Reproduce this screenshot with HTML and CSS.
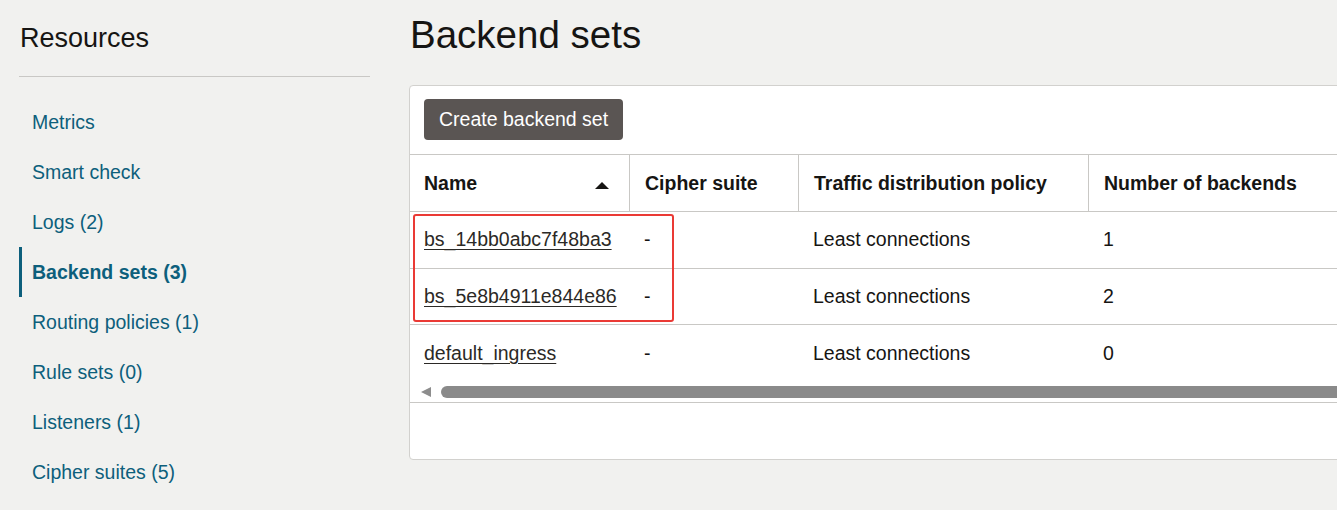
FILE: index.html
```html
<!DOCTYPE html>
<html lang="en">
<head>
<meta charset="utf-8">
<title>Backend sets</title>
<link rel="stylesheet" href="styles.css">
</head>
<body>
<aside class="sidebar">
  <h2 class="side-title">Resources</h2>
  <hr class="side-rule">
  <nav class="side-nav">
    <a class="nav-item" href="#">Metrics</a>
    <a class="nav-item" href="#">Smart check</a>
    <a class="nav-item" href="#">Logs (2)</a>
    <a class="nav-item active" href="#">Backend sets (3)</a>
    <a class="nav-item" href="#">Routing policies (1)</a>
    <a class="nav-item" href="#">Rule sets (0)</a>
    <a class="nav-item" href="#">Listeners (1)</a>
    <a class="nav-item" href="#">Cipher suites (5)</a>
  </nav>
</aside>
<main class="main">
  <h1 class="page-title">Backend sets</h1>
  <section class="panel">
    <div class="toolbar">
      <button class="btn">Create backend set</button>
    </div>
    <div class="grid">
      <div class="row head">
        <div class="cell first">Name <span class="sort"></span></div>
        <div class="cell">Cipher suite</div>
        <div class="cell">Traffic distribution policy</div>
        <div class="cell">Number of backends</div>
        <div class="cell"></div>
      </div>
      <div class="row">
        <div class="cell first"><a class="link" href="#">bs_14bb0abc7f48ba3</a></div>
        <div class="cell">-</div>
        <div class="cell">Least connections</div>
        <div class="cell">1</div>
        <div class="cell"></div>
      </div>
      <div class="row">
        <div class="cell first"><a class="link" href="#">bs_5e8b4911e844e86</a></div>
        <div class="cell">-</div>
        <div class="cell">Least connections</div>
        <div class="cell">2</div>
        <div class="cell"></div>
      </div>
      <div class="row last">
        <div class="cell first"><a class="link" href="#">default_ingress</a></div>
        <div class="cell">-</div>
        <div class="cell">Least connections</div>
        <div class="cell">0</div>
        <div class="cell"></div>
      </div>
      <div class="hscroll">
        <span class="scroll-arrow"></span>
        <span class="scroll-thumb"></span>
      </div>
      <div class="highlight"></div>
    </div>
    <div class="panel-foot"></div>
  </section>
</main>
</body>
</html>
```

FILE: styles.css
```css
html, body {
  margin: 0;
  padding: 0;
}
body {
  width: 1337px;
  height: 510px;
  overflow: hidden;
  background: #f1f1ef;
  font-family: "Liberation Sans", Arial, sans-serif;
  color: #161513;
  display: flex;
  align-items: flex-start;
}
.sidebar {
  width: 351px;
  margin-left: 19px;
  flex: none;
}
.side-title {
  margin: 22px 0 0 1px;
  font-size: 27px;
  line-height: 32px;
  font-weight: 400;
  color: #161513;
}
.side-rule {
  margin: 22px 0 0 0;
  border: 0;
  border-top: 1px solid #c9c8c5;
  height: 0;
}
.side-nav {
  display: flex;
  flex-direction: column;
  margin-top: 20px;
}
.nav-item {
  display: block;
  height: 50px;
  line-height: 50px;
  font-size: 19.5px;
  color: #0d5f7c;
  text-decoration: none;
  border-left: 3px solid transparent;
  box-sizing: border-box;
  padding-left: 10px;
}
.nav-item.active {
  font-weight: 700;
  border-left-color: #0d5f7c;
}
.main {
  margin-left: 39px;
  flex: none;
  width: 1100px;
}
.page-title {
  margin: 13px 0 0 1px;
  font-size: 38.5px;
  line-height: 44px;
  font-weight: 400;
  color: #161513;
}
.panel {
  margin-top: 28px;
  width: 1000px;
  background: #fff;
  border: 1px solid #d2d1ce;
  border-radius: 4px;
}
.toolbar {
  padding: 13px 14px 14px;
}
.btn {
  display: block;
  height: 41px;
  padding: 0 15px;
  border: 0;
  border-radius: 4px;
  background: #5a5553;
  color: #fff;
  font-family: "Liberation Sans", Arial, sans-serif;
  font-size: 19.5px;
}
.grid {
  position: relative;
  border-top: 1px solid #c9c8c5;
}
.row {
  display: grid;
  grid-template-columns: 219px 169px 290px 300px 1fr;
  height: 56.5px;
  border-bottom: 1px solid #c9c8c5;
  box-sizing: border-box;
  font-size: 19.5px;
}
.row.head {
  height: 57px;
  font-weight: 700;
}
.row.last {
  border-bottom: 0;
}
.cell {
  display: flex;
  align-items: center;
  padding-left: 15px;
  white-space: nowrap;
}
.head .cell + .cell {
  border-left: 1px solid #c9c8c5;
}
.cell.first {
  padding-left: 14px;
  position: relative;
}
.sort {
  position: absolute;
  right: 20px;
  top: 27px;
  width: 0;
  height: 0;
  border-left: 7px solid transparent;
  border-right: 7px solid transparent;
  border-bottom: 7px solid #161513;
}
.link {
  color: #2b2926;
  text-decoration: underline;
  text-underline-offset: 3px;
  text-decoration-thickness: 1px;
}
.hscroll {
  height: 21px;
  border-bottom: 1px solid #c9c8c5;
  display: flex;
  align-items: flex-start;
  box-sizing: border-box;
}
.scroll-arrow {
  margin: 5px 0 0 11px;
  width: 0;
  height: 0;
  border-top: 5.5px solid transparent;
  border-bottom: 5.5px solid transparent;
  border-right: 10px solid #8d8d8d;
}
.scroll-thumb {
  margin: 4px 0 0 10px;
  flex: 1;
  height: 12px;
  border-radius: 6px;
  background: #8a8a8a;
}
.highlight {
  position: absolute;
  left: 3px;
  top: 59px;
  width: 261px;
  height: 108px;
  border: 2px solid #ea3a35;
  border-radius: 3px;
  box-sizing: border-box;
  pointer-events: none;
}
.panel-foot {
  height: 56px;
}
```
